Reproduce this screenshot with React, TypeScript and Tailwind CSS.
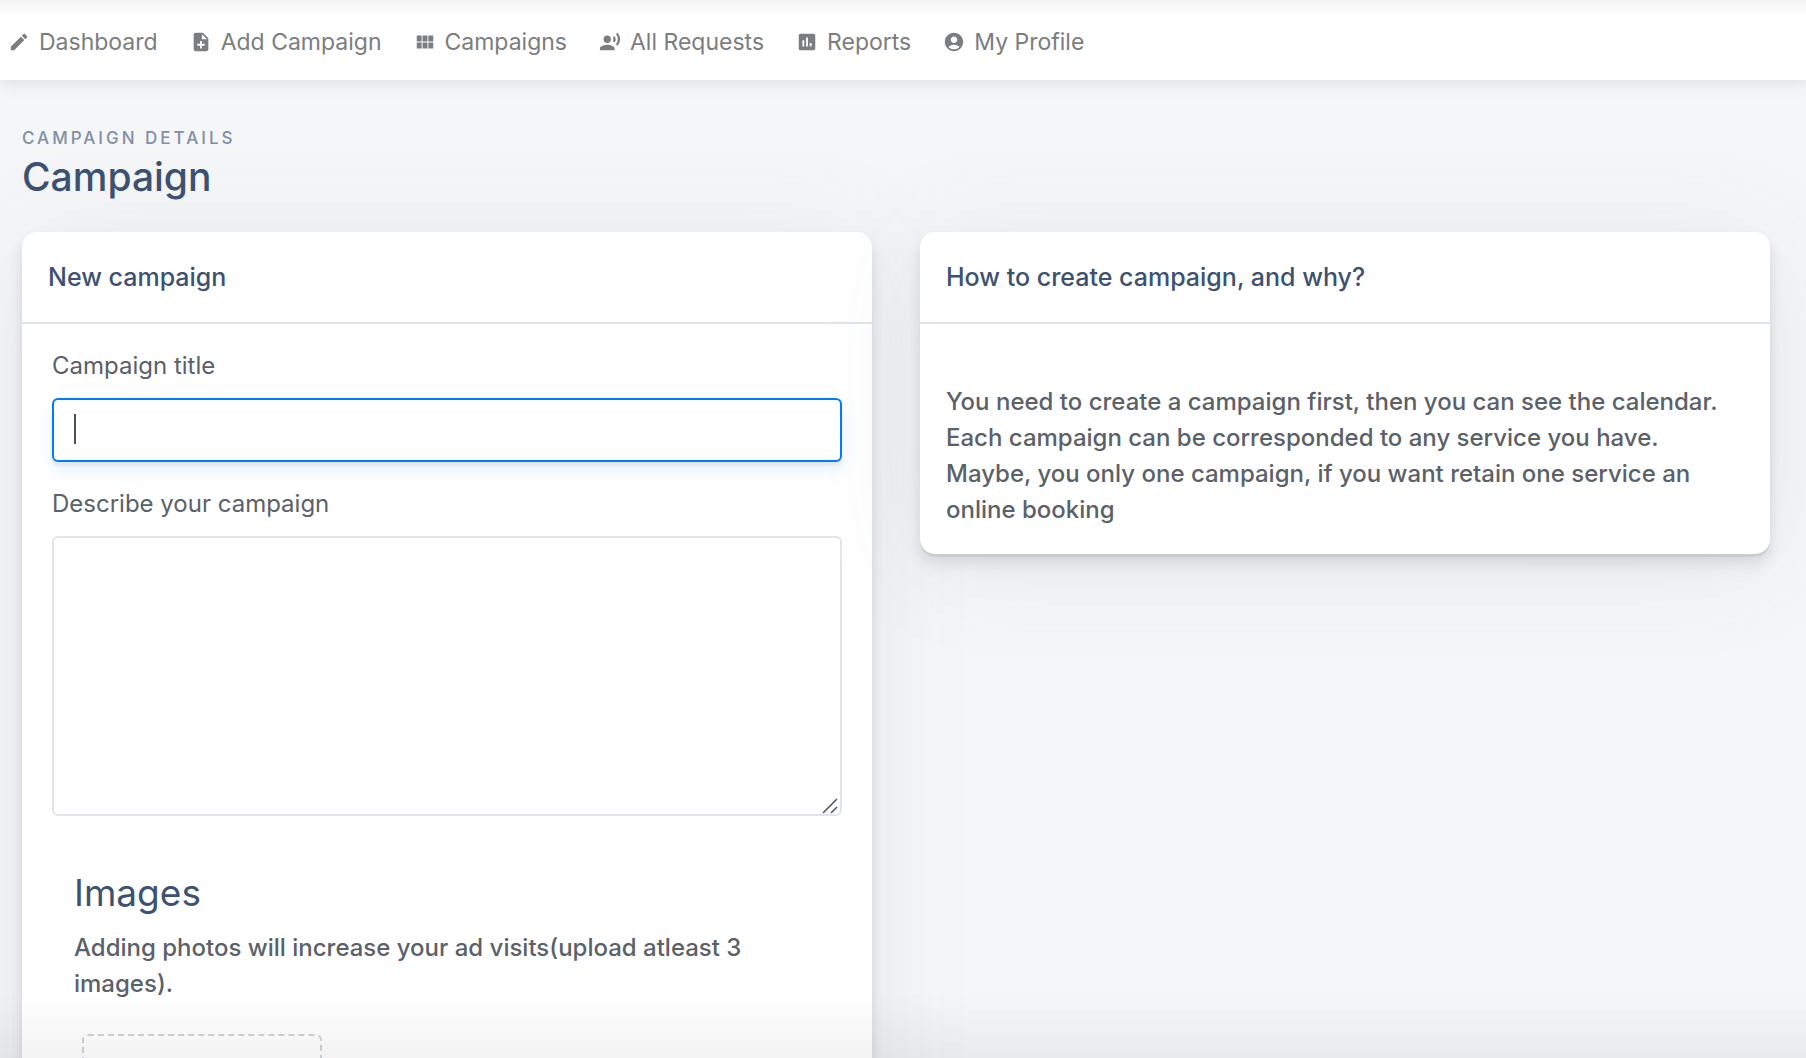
import { MdAccountCircle, MdAssessment, MdEdit, MdNoteAdd, MdRecordVoiceOver, MdViewModule } from "react-icons/md";
import type { IconType } from "react-icons";
import type { ReactNode } from "react";

const links: { label: string; icon: IconType }[] = [
  { label: "Dashboard", icon: MdEdit },
  { label: "Add Campaign", icon: MdNoteAdd },
  { label: "Campaigns", icon: MdViewModule },
  { label: "All Requests", icon: MdRecordVoiceOver },
  { label: "Reports", icon: MdAssessment },
  { label: "My Profile", icon: MdAccountCircle },
];

function Card({ title, children }: { title: string; children: ReactNode }) {
  return (
    <section className="rounded-[15px] bg-white shadow-[0_3px_0_rgba(90,97,105,0.11),0_6px_12px_rgba(90,97,105,0.12),0_15px_15px_rgba(90,97,105,0.06),0_10px_105px_rgba(90,97,105,0.1)]">
      <h2 className="border-b-2 border-[#e1e5eb] px-[26px] py-[27px] text-[25px] leading-9 font-medium text-[#3d5170]">{title}</h2>
      {children}
    </section>
  );
}

export default function App() {
  return (
    <div className="relative flex h-screen flex-col overflow-hidden bg-[#f5f6f8] font-['Inter',sans-serif] text-[#5a6169]">
      <header className="relative z-10 bg-white shadow-[0_3px_15px_rgba(90,97,105,0.15)]">
        <nav className="flex h-20 items-center gap-8 bg-linear-to-b from-[#f3f3f3] to-white to-20% px-2 pt-1">
          {links.map(({ label, icon: Icon }) => (
            <a key={label} href="#" className="flex items-center gap-[9px] text-[23px] leading-9 text-[#7b7d7f]">
              <Icon className="size-[22px]" aria-hidden="true" />
              {label}
            </a>
          ))}
        </nav>
      </header>

      <main className="flex-1 pt-12 pr-9 pl-[22px]">
        <p className="text-[17px] leading-5 font-medium tracking-[3px] text-[#818ea3] uppercase">Campaign details</p>
        <h1 className="pt-0.5 text-[39px] leading-[54px] font-medium text-[#3d5170]">Campaign</h1>

        <div className="mt-7 grid grid-cols-2 items-start gap-12">
          <Card title="New campaign">
            <form className="px-[30px] pt-6 pb-12">
              <label htmlFor="title" className="block text-2xl leading-9">Campaign title</label>
              <div className="relative mt-[14px]">
                <input
                  id="title"
                  type="text"
                  autoFocus
                  className="block h-16 w-full rounded-md border-2 border-[#007bff] bg-white px-5 text-2xl caret-transparent shadow-[0_8px_17px_rgba(0,123,255,0.1),0_4px_3px_rgba(0,0,0,0.06)] outline-none"
                />
                <span className="absolute top-4 left-[22px] h-[30px] w-0.5 bg-[#495057]" />
              </div>
              <label htmlFor="description" className="mt-6 block text-2xl leading-9">Describe your campaign</label>
              <div className="relative mt-[14px]">
                <textarea
                  id="description"
                  className="block h-[280px] w-full resize-y rounded-md border-2 border-[#e1e5eb] bg-white px-5 py-3 text-2xl outline-none [&::-webkit-resizer]:hidden"
                />
                <svg className="pointer-events-none absolute right-1 bottom-0.5 size-4" viewBox="0 0 16 16" fill="none" stroke="#55585c" strokeWidth="1.6" aria-hidden="true">
                  <path d="M1 15 15 1M9 15l6-6" />
                </svg>
              </div>

              <div className="px-[22px] pt-[50px]">
                <h3 className="text-[37px] leading-[54px] text-[#3d5170]">Images</h3>
                <p className="mt-2.5 text-2xl leading-9 font-medium">
                  Adding photos will increase your ad visits(upload atleast 3 images).
                </p>
                <button type="button" aria-label="Upload image" className="mt-8 ml-2 block size-60 rounded-md border-2 border-dashed border-[#ced4da]" />
              </div>
            </form>
          </Card>

          <Card title="How to create campaign, and why?">
            <p className="px-[26px] pt-[60px] pb-[26px] text-2xl leading-9 font-medium">
              You need to create a campaign first, then you can see the calendar. Each campaign can be corresponded to any
              service you have. Maybe, you only one campaign, if you want retain one service an online booking
            </p>
          </Card>
        </div>
      </main>

      <div className="pointer-events-none absolute inset-x-0 bottom-0 h-16 bg-linear-to-b from-transparent to-black/5" />
    </div>
  );
}
